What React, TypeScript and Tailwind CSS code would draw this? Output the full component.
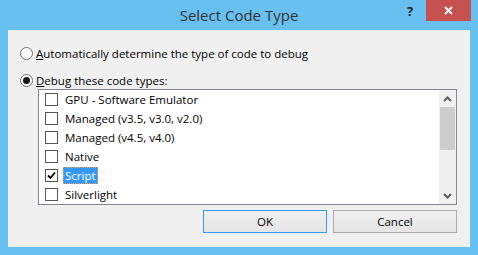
import type { JSX } from "react";

const items = [
  { label: "GPU - Software Emulator", checked: false },
  { label: "Managed (v3.5, v3.0, v2.0)", checked: false },
  { label: "Managed (v4.5, v4.0)", checked: false },
  { label: "Native", checked: false },
  { label: "Script", checked: true, selected: true },
  { label: "Silverlight", checked: false },
];

const Radio = ({ on }: { on: boolean }): JSX.Element => (
  <span className="w-[13px] h-[13px] rounded-full border border-[#707070] bg-white flex items-center justify-center shrink-0">
    {on && <span className="w-[7px] h-[7px] rounded-full bg-[#1a1a1a]" />}
  </span>
);

const Check = ({ on }: { on: boolean }): JSX.Element => (
  <span className="w-[13px] h-[13px] border border-[#555] bg-white flex items-center justify-center shrink-0">
    {on && (
      <svg width="9" height="9" viewBox="0 0 9 9">
        <path d="M1 4.5 L3.5 7 L8 1.5" fill="none" stroke="#000" strokeWidth="1.8" />
      </svg>
    )}
  </span>
);

export default function App(): JSX.Element {
  return (
    <div
      className="w-[478px] h-[255px] bg-[#68c0f0] flex flex-col text-[11.5px] text-black"
      style={{ fontFamily: '"Open Sans", "Noto Sans", sans-serif' }}
    >
      {/* title bar */}
      <div className="h-[30px] flex items-start relative">
        <div className="flex-1 text-center text-[15px] text-[#333] pt-[4px]">Select Code Type</div>
        <span className="absolute left-[407px] top-[2px] text-[13px] font-bold text-[#222]">?</span>
        <div className="absolute left-[426px] top-0 w-[45px] h-[21px] bg-[#c75050] flex items-center justify-center">
          <svg width="9" height="9" viewBox="0 0 9 9">
            <path d="M1 1 L8 8 M8 1 L1 8" stroke="#fff" strokeWidth="1.8" />
          </svg>
        </div>
      </div>

      {/* body */}
      <div className="mx-[8px] h-[217px] bg-[#f0f0f0] flex flex-col pl-[12px] pr-[13px] pt-[17px]">
        <div className="h-[13px] flex items-center gap-[3px] leading-none">
          <Radio on={false} />
          <span><span className="underline">A</span>utomatically determine the type of code to debug</span>
        </div>
        <div className="h-[13px] mt-[14px] flex items-center gap-[3px] leading-none">
          <Radio on={true} />
          <span><span className="underline">D</span>ebug these code types:</span>
        </div>

        <div className="ml-[18px] mt-[2px] h-[116px] border border-[#828790] bg-white flex">
          <div className="flex-1 flex flex-col">
            {items.map((it) => (
              <div key={it.label} className="h-[19px] flex items-center pl-[6px]">
                <Check on={it.checked} />
                <span
                  className={
                    it.selected
                      ? "ml-[5px] px-[2px] h-[17px] flex items-center bg-[#3399ff] text-white outline-1 outline-dotted outline-[#f0a040] -outline-offset-1"
                      : "ml-[5px] px-[2px] h-[17px] flex items-center"
                  }
                >
                  {it.label}
                </span>
              </div>
            ))}
          </div>
          <div className="w-[17px] bg-[#f0f0f0] flex flex-col">
            <div className="h-[17px] flex items-center justify-center">
              <svg width="9" height="6" viewBox="0 0 9 6">
                <path d="M1 5 L4.5 1.5 L8 5" fill="none" stroke="#606060" strokeWidth="2" />
              </svg>
            </div>
            <div className="h-[43px] bg-[#cdcdcd] mx-[1px]" />
            <div className="flex-1" />
            <div className="h-[17px] flex items-center justify-center">
              <svg width="9" height="6" viewBox="0 0 9 6">
                <path d="M1 1 L4.5 4.5 L8 1" fill="none" stroke="#606060" strokeWidth="2" />
              </svg>
            </div>
          </div>
        </div>

        <div className="mt-[5px] flex justify-end gap-[6px]">
          <button className="w-[124px] h-[23px] border border-[#3399ff] bg-gradient-to-b from-[#f0f0f0] to-[#e5e5e5]">
            OK
          </button>
          <button className="w-[124px] h-[23px] border border-[#acacac] bg-gradient-to-b from-[#f0f0f0] to-[#e5e5e5]">
            Cancel
          </button>
        </div>
      </div>
    </div>
  );
}
